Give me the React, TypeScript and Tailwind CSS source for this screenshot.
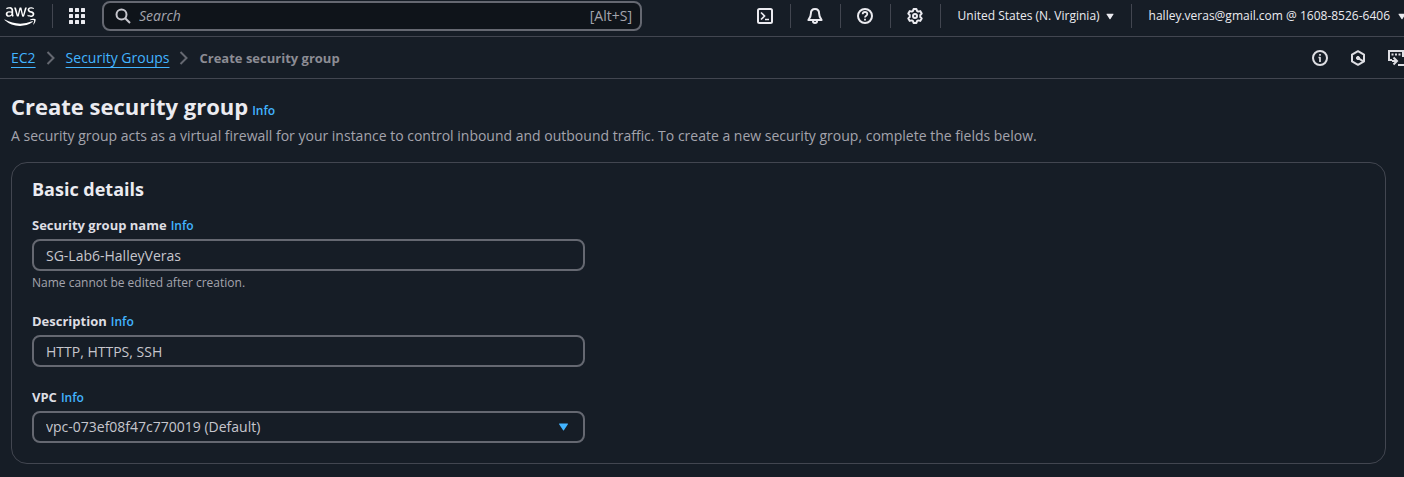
import React from "react";
import { FaAws } from "react-icons/fa";

function Stroke({ children, className = "size-4" }: { children: React.ReactNode; className?: string }) {
  return (
    <svg viewBox="0 0 16 16" className={className} fill="none" stroke="currentColor" strokeWidth="2" strokeLinejoin="round" aria-hidden="true">
      {children}
    </svg>
  );
}

function Caret({ className }: { className: string }) {
  return (
    <svg viewBox="0 0 10 8" className={className} fill="currentColor" aria-hidden="true">
      <path d="M1 .5h8a.5.5 0 0 1 .4.8l-4 6a.5.5 0 0 1-.8 0l-4-6A.5.5 0 0 1 1 .5z" />
    </svg>
  );
}

function Chevron() {
  return (
    <svg viewBox="0 0 16 16" className="size-4 shrink-0 text-[#656871]" fill="none" stroke="currentColor" strokeWidth="2" aria-hidden="true">
      <path d="M4.500 2l6 6-6 6" />
    </svg>
  );
}

function ToolButton({ label, divided = true, children }: { label: string; divided?: boolean; children: React.ReactNode }) {
  return (
    <div className="flex items-center">
      {divided && <span className="h-6 w-px bg-[#424650]" />}
      <button type="button" aria-label={label} className="flex h-8 w-[49px] items-center justify-center text-[#ebebf0]">
        {children}
      </button>
    </div>
  );
}

function Info() {
  return (
    <a href="#info" className="text-xs font-semibold text-[#42b4ff]">
      Info
    </a>
  );
}

function Field({ id, label, hint, children }: { id: string; label: string; hint?: string; children: React.ReactNode }) {
  return (
    <div className="w-full max-w-[553px]">
      <div className="mb-1 flex items-baseline gap-1 text-[13px] leading-5">
        <label htmlFor={id} className="font-bold text-[#dedee3]">
          {label}
        </label>
        <Info />
      </div>
      {children}
      {hint && <p className="mt-1 text-xs leading-4 text-[#a4a4ad]">{hint}</p>}
    </div>
  );
}

const control =
  "block h-8 w-full rounded-lg border-2 border-[#656871] bg-[#161d26] px-3 text-sm leading-5 text-[#c6c6cd] outline-none focus:border-[#42b4ff]";

export default function App() {
  return (
    <div className="min-h-screen overflow-hidden bg-[#161d26] font-['Open_Sans','Noto_Sans',sans-serif] text-[#c6c6cd]">
      <header className="flex h-[37px] items-center border-b border-[#424650] pb-1">
        <a href="#home" aria-label="AWS" className="ml-1 shrink-0 text-white">
          <FaAws className="h-[25px] w-8" />
        </a>
        <span className="ml-4 h-6 w-px shrink-0 bg-[#424650]" />
        <button type="button" aria-label="Services" className="ml-4 flex size-4 shrink-0 text-[#ebebf0]">
          <svg viewBox="0 0 16 16" className="size-4" fill="currentColor" aria-hidden="true">
            {[0, 6, 12].map((y) => [0, 6, 12].map((x) => <rect key={`${x}-${y}`} x={x} y={y} width="4" height="4" rx=".5" />))}
          </svg>
        </button>
        <div className="ml-[17px] flex h-[30px] min-w-0 max-w-[540px] flex-1 items-center gap-2 rounded-lg border-2 border-[#656871] bg-[#0f141a] pr-2 pl-[11px]">
          <Stroke className="size-4 shrink-0 text-[#c6c6cd]">
            <circle cx="6.500" cy="6.500" r="5" />
            <path d="M10.200 10.200l4.800 4.800" />
          </Stroke>
          <input type="search" aria-label="Search" placeholder="Search" className="min-w-0 flex-1 bg-transparent text-sm italic outline-none placeholder:text-[#a4a4ad]" />
          <span className="text-sm text-[#a4a4ad]">[Alt+S]</span>
        </div>

        <div className="-mr-1.5 ml-auto flex shrink-0 items-center">
          <ToolButton label="CloudShell" divided={false}>
            <Stroke>
              <rect x="1" y="1" width="14" height="14" rx="1.500" />
              <path d="M4 4.500L7.500 8 4 11.500M8 11.500h4" strokeWidth="1.700" strokeLinejoin="miter" />
            </Stroke>
          </ToolButton>
          <ToolButton label="Notifications">
            <Stroke>
              <path d="M8 1C5.300 1 3.900 3 3.900 5.500c0 3.300-1.200 4.800-2.500 6.500h13.200c-1.300-1.700-2.500-3.200-2.500-6.500C12.100 3 10.700 1 8 1z" />
              <path d="M6 12v1.300c0 .9.800 1.700 2 1.700s2-.8 2-1.700V12" />
            </Stroke>
          </ToolButton>
          <ToolButton label="Help">
            <Stroke>
              <circle cx="8" cy="8" r="7" />
              <path d="M5.700 6.200C5.700 4.900 6.700 4 8 4s2.300.9 2.300 2.100C10.300 7.700 8 7.700 8 9.500M8 10.700v1.800" strokeWidth="1.800" />
            </Stroke>
          </ToolButton>
          <ToolButton label="Settings">
            <Stroke>
              <path d="M6.600 1h2.800l.6 1.900 1.200.7 2-.5 1.500 2.500L13.300 7v2l1.400 1.400-1.500 2.500-2-.5-1.200.7-.6 1.900H6.600L6 13.100l-1.200-.7-2 .5-1.500-2.500L2.700 9V7L1.300 5.600l1.500-2.500 2 .5L6 2.900z" />
              <circle cx="8" cy="8" r="2" />
            </Stroke>
          </ToolButton>
          <span className="h-6 w-px bg-[#424650]" />
          <button type="button" className="flex items-center gap-1.5 px-[17px] text-xs font-medium whitespace-nowrap text-[#ebebf0]">
            United States (N. Virginia)
            <Caret className="h-[7px] w-2" />
          </button>
          <span className="h-6 w-px bg-[#424650]" />
          <button type="button" className="flex items-center gap-2 pr-1 pl-[17px] text-xs font-medium whitespace-nowrap text-[#ebebf0]">
            halley.veras@gmail.com @ 1608-8526-6406
            <Caret className="h-[7px] w-2" />
          </button>
        </div>
      </header>

      <div className="flex h-[42px] items-center border-b border-[#424650] pl-[11px]">
        <nav aria-label="Breadcrumbs" className="flex items-center gap-[7px] text-sm leading-5">
          <a href="#ec2" className="text-[#42b4ff] underline underline-offset-4">
            EC2
          </a>
          <Chevron />
          <a href="#security-groups" className="text-[#42b4ff] underline underline-offset-4">
            Security Groups
          </a>
          <Chevron />
          <span className="text-[13px] font-bold text-[#8c8c94]">Create security group</span>
        </nav>
        <div className="ml-auto flex shrink-0 items-center gap-[22px] text-[#dedee3]">
          <button type="button" aria-label="Information">
            <Stroke>
              <circle cx="8" cy="8" r="7" />
              <path d="M6.500 7.500H8V12M8 4v1.800" strokeWidth="1.700" />
            </Stroke>
          </button>
          <button type="button" aria-label="Amazon Q">
            <Stroke>
              <path d="M8 1.200l6 3.400v6.800l-6 3.400-6-3.400V4.600z" />
              <circle cx="8" cy="8" r="1.600" fill="currentColor" strokeWidth="1" />
              <path d="M8 8l5 3.200" />
            </Stroke>
          </button>
          <button type="button" aria-label="Open panel">
            <Stroke>
              <path d="M4 10H1V1h14v6M10 15h6M3.500 4.500h2M7 4.500h2M10.500 4.500h2M4 11h4.500M5.500 7.500L9 11l-3.500 3.500" strokeLinejoin="miter" />
            </Stroke>
          </button>
        </div>
      </div>

      <main className="pt-[13px] pr-[18px] pb-[13px] pl-[11px]">
        <div className="flex items-baseline gap-1">
          <h1 className="text-[22px] leading-7 font-bold text-[#ebebf0]">Create security group</h1>
          <Info />
        </div>
        <p className="mt-1 text-sm leading-6 text-[#a4a4ad]">
          A security group acts as a virtual firewall for your instance to control inbound and outbound traffic. To create a new security group, complete the fields below.
        </p>

        <section className="mt-[14px] rounded-2xl border border-[#424650] px-5 pt-[14px] pb-5">
          <h2 className="text-lg leading-6 font-bold text-[#ebebf0]">Basic details</h2>
          <form className="mt-[14px] flex flex-col gap-5">
            <Field id="group-name" label="Security group name" hint="Name cannot be edited after creation.">
              <input id="group-name" type="text" defaultValue="SG-Lab6-HalleyVeras" className={control} />
            </Field>
            <Field id="description" label="Description">
              <input id="description" type="text" defaultValue="HTTP, HTTPS, SSH" className={control} />
            </Field>
            <Field id="vpc" label="VPC">
              <div className="relative">
                <select id="vpc" className={`${control} appearance-none`}>
                  <option>vpc-073ef08f47c770019 (Default)</option>
                </select>
                <Caret className="pointer-events-none absolute top-3 right-4 h-2 w-[11px] text-[#42b4ff]" />
              </div>
            </Field>
          </form>
        </section>
      </main>
    </div>
  );
}
